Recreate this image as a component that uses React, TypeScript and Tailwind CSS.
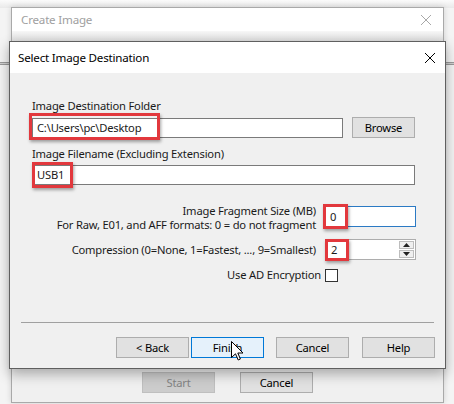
import React from "react"

const font = { fontFamily: '"Noto Sans", "Open Sans", sans-serif' }

function RedBox({ className }: { className: string }) {
  return (
    <div
      className={`absolute border-[3px] border-[#e2383d] shadow-[1px_2px_3px_rgba(0,0,0,0.35)] pointer-events-none ${className}`}
    />
  )
}

type Variant = "normal" | "default" | "disabled" | "browse"

const variants: Record<Variant, string> = {
  normal: "w-[73px] border-[#adadad] bg-[#e1e1e1] text-black",
  default: "w-[73px] border-[#0078d7] bg-[#e5f1fb] text-black",
  disabled: "w-[73px] border-[#bfbfbf] bg-[#cccccc] text-[#838383]",
  browse: "w-[63px] border-[#adadad] bg-[#e1e1e1] text-black",
}

function WinButton({ label, variant = "normal", className = "" }: { label: string; variant?: Variant; className?: string }) {
  return (
    <div className={`h-[21px] flex items-center justify-center border ${variants[variant]} ${className}`}>
      {label}
    </div>
  )
}

function CloseX({ color }: { color: string }) {
  return (
    <svg width="12" height="12" viewBox="0 0 12 12">
      <path d="M1 1 L11 11 M11 1 L1 11" stroke={color} strokeWidth="1" />
    </svg>
  )
}

function Cursor() {
  return (
    <svg className="absolute left-[231px] top-[341px]" width="13" height="21" viewBox="0 0 13 21">
      <path
        d="M0.5 0.5 L0.5 16.5 L4.5 12.8 L7.2 19 L9.4 18 L6.8 12 L12 12 Z"
        fill="white"
        stroke="black"
        strokeWidth="1"
        strokeLinejoin="round"
      />
    </svg>
  )
}

export default function App() {
  return (
    <div
      className="relative w-[454px] h-[404px] overflow-hidden bg-[#f4f4f4] text-[11.2px] tracking-[-0.2px] leading-[16px] text-[#1a1a1a]"
      style={font}
    >
      {/* something behind both windows */}
      <div className="absolute left-0 right-0 top-[62px] h-[3px] border-t border-b border-[#9a9a9a] bg-[#d0d0d0]" />
      <div className="absolute left-0 right-0 top-0 h-[8px] bg-gradient-to-b from-[#fbfbfb] to-[#e9e9e9]" />

      {/* back window */}
      <div className="absolute left-[11px] top-[7px] w-[433px] h-[396px] flex flex-col border border-[#a9a9a9] bg-[#f0f0f0] shadow-[0_0_6px_rgba(0,0,0,0.15)]">
        <div className="h-[23px] bg-white flex items-center justify-between pl-[9px] pr-[11px] text-[#a0a0a0]">
          <span className="text-[11.6px]">Create Image</span>
          <CloseX color="#a8a8a8" />
        </div>
        <div className="h-[11px] bg-gradient-to-b from-[#f7f7f7] to-[#dcdcdc]" />
        <div className="mt-auto flex justify-center gap-[25px] pb-[9px]">
          <WinButton label="Start" variant="disabled" />
          <WinButton label="Cancel" />
        </div>
      </div>

      {/* front dialog */}
      <div className="absolute left-[9px] top-[41px] w-[437px] h-[328px] flex flex-col border border-[#5f5f5f] bg-[#f0f0f0] shadow-[0_5px_12px_rgba(0,0,0,0.3)]">
        <div className="h-[31px] bg-white flex items-center justify-between pl-[8px] pr-[9px] text-black">
          <span className="text-[11.6px]">Select Image Destination</span>
          <CloseX color="#000" />
        </div>

        <div className="flex flex-col pl-[22px] pr-[29px] pt-[25px]">
          <div>Image Destination Folder</div>
          <div className="mt-[3px] flex items-center gap-[9px]">
            <div className="relative w-[311px] h-[20px] border border-[#7a7a7a] bg-white flex items-center pl-[4px]">
              C:\Users\pc\Desktop
              <RedBox className="left-[-4px] top-[-6px] w-[131px] h-[27px]" />
            </div>
            <WinButton label="Browse" variant="browse" />
          </div>

          <div className="mt-[8px]">Image Filename (Excluding Extension)</div>
          <div className="mt-[3px] relative w-[383px] h-[20px] border border-[#7a7a7a] bg-white flex items-center pl-[4px]">
            USB1
            <RedBox className="left-[-1px] top-[-4px] w-[41px] h-[26px]" />
          </div>

          <div className="mt-[18px] grid grid-cols-[1fr_92px] gap-x-[8px] items-start">
            <div className="text-right leading-[14px] pt-[1px] whitespace-nowrap">
              <div>Image Fragment Size (MB)</div>
              <div>For Raw, E01, and AFF formats: 0 = do not fragment</div>
            </div>
            <div className="relative mt-[3px] h-[21px] border border-[#2b7ac4] bg-white flex items-center pl-[5px]">
              0
              <RedBox className="left-[-2px] top-[-3px] w-[25px] h-[25px]" />
            </div>
          </div>

          <div className="mt-[7px] grid grid-cols-[1fr_91px] gap-x-[9px] items-center">
            <div className="text-right whitespace-nowrap">Compression (0=None, 1=Fastest, ..., 9=Smallest)</div>
            <div className="relative h-[21px] border border-[#adadad] bg-white flex items-center pl-[5px]">
              2
              <div className="absolute right-0 top-0 bottom-0 w-[17px] flex flex-col gap-[1px] p-[1px]">
                <div className="flex-1 border border-[#bdbdbd] bg-[#efefef] flex items-center justify-center">
                  <svg width="7" height="4" viewBox="0 0 7 4">
                    <path d="M0 4 L3.5 0 L7 4 Z" fill="#222" />
                  </svg>
                </div>
                <div className="flex-1 border border-[#bdbdbd] bg-[#efefef] flex items-center justify-center">
                  <svg width="7" height="4" viewBox="0 0 7 4">
                    <path d="M0 0 L3.5 4 L7 0 Z" fill="#222" />
                  </svg>
                </div>
              </div>
              <RedBox className="left-[-1px] top-[-1px] w-[24px] h-[22px]" />
            </div>
          </div>

          <div className="mt-[7px] flex justify-end items-center gap-[4px] pr-[78px]">
            <span>Use AD Encryption</span>
            <div className="w-[13px] h-[13px] border border-[#333] bg-white" />
          </div>
        </div>

        <div className="mt-auto mx-[11px] border-t border-[#a0a0a0]" />
        <div className="flex justify-end pr-[10px] pt-[14px] pb-[10px]">
          <WinButton label="< Back" />
          <WinButton label="Finish" variant="default" className="ml-[2px]" />
          <WinButton label="Cancel" className="ml-[12px]" />
          <WinButton label="Help" className="ml-[13px]" />
        </div>
      </div>

      <Cursor />
    </div>
  )
}
